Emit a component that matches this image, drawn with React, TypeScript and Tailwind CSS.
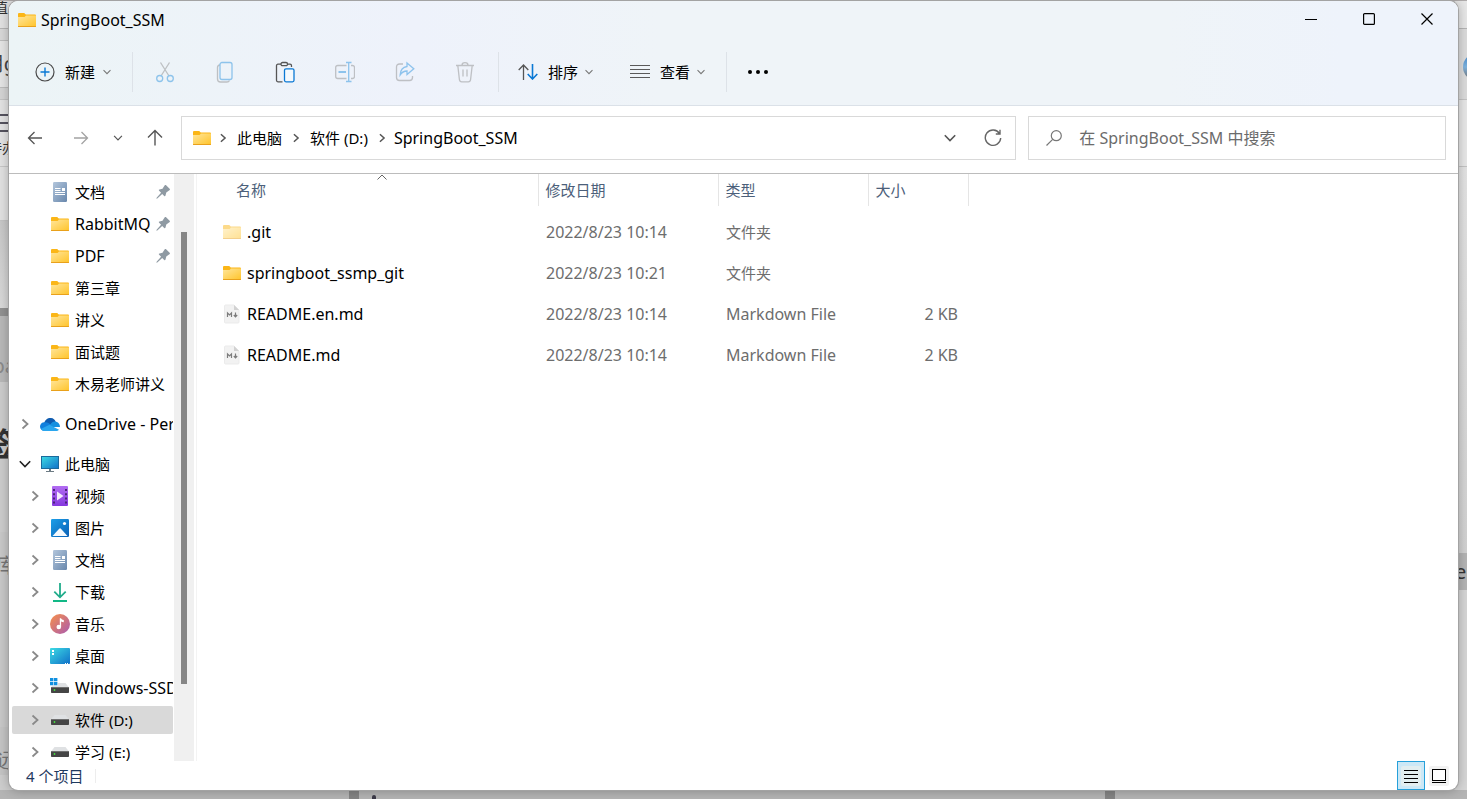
import { ReactNode, useState } from "react";
import { twMerge } from "tailwind-merge";

type IconProps = { className?: string };

const ChevronRight = ({ className }: IconProps) => (
  <svg viewBox="0 0 8 12" className={twMerge("w-2 h-3", className)} fill="none" stroke="currentColor" strokeWidth="1.8">
    <path d="M1.5 1.5 6.5 6l-5 4.5" />
  </svg>
);

const ChevronDown = ({ className }: IconProps) => (
  <svg viewBox="0 0 12 8" className={twMerge("w-2 h-1.5", className)} fill="none" stroke="currentColor" strokeWidth="1.6">
    <path d="M.8 1.2 6 6.6l5.2-5.4" />
  </svg>
);

const FolderIcon = ({ className }: IconProps) => (
  <svg viewBox="0 0 18 14" className={twMerge("w-[18px] h-3.5 shrink-0", className)}>
    <defs>
      <linearGradient id="folder" x1="0" y1="0" x2="1" y2="1">
        <stop offset="0" stopColor="#ffe69c" />
        <stop offset="1" stopColor="#ffc52e" />
      </linearGradient>
    </defs>
    <path d="M0 1a1 1 0 0 1 1-1h5.2l1.6 1.4H17a1 1 0 0 1 1 1V6H0z" fill="#fbb617" />
    <path d="M0 4h6.6l1.4-1.6h10V13H0z" fill="url(#folder)" />
    <path d="M0 13h18v.4a.6.6 0 0 1-.6.6H.6a.6.6 0 0 1-.6-.6z" fill="#e9a11b" />
  </svg>
);

const DocumentIcon = () => (
  <svg viewBox="0 0 14 20" className="w-3.5 h-5">
    <defs>
      <linearGradient id="doc" x1="0" y1="0" x2="1" y2="1">
        <stop offset="0" stopColor="#b3c6dc" />
        <stop offset="1" stopColor="#6887ac" />
      </linearGradient>
    </defs>
    <rect width="14" height="20" rx="1.2" fill="url(#doc)" />
    <path d="M2 6.500h5.500M2 8.500h5.500M2 10.500h10M2 12.500h10" stroke="#fff" />
    <rect x="9" y="6" width="3" height="3" fill="#fff" />
  </svg>
);

const CloudIcon = () => (
  <svg viewBox="0 0 20 13" className="w-5 h-[13px]">
    <path d="M4 6C4.800 1.500 8-.2 11 .1c2.300.2 4 1.600 4.700 3.600L9 8z" fill="#0f5cb0" />
    <path d="M4.500 4.300C1.800 4.300 0 6.300 0 8.600 0 11 1.800 13 4.400 13L12 7.500 8.500 5c-1-.6-2.500-.8-4-.7z" fill="#1180dd" />
    <path d="M10 7c1.500-2.800 4.200-3.900 6.300-3.200C18.800 4.500 20 6.500 20 9L9 9z" fill="#1590e0" />
    <path d="M9.500 6.800 19 11.800c-.7.800-1.700 1.200-3 1.200H4.400c-1.600 0-2.900-.7-3.600-1.900z" fill="#2aa6ee" />
  </svg>
);

const ComputerIcon = () => (
  <svg viewBox="0 0 18 16" className="w-[18px] h-4">
    <defs>
      <linearGradient id="screen" x1="0" y1="0" x2="1" y2="1">
        <stop offset="0" stopColor="#3ddbe4" />
        <stop offset="1" stopColor="#1070c8" />
      </linearGradient>
    </defs>
    <rect x=".5" y=".5" width="17" height="12" fill="url(#screen)" stroke="#1b6a9c" />
    <path d="M8 13h2v2h3v1H5v-1h3z" fill="#6d7b84" />
  </svg>
);

const VideoIcon = () => (
  <svg viewBox="0 0 16 20" className="w-4 h-5">
    <defs>
      <linearGradient id="video" x1="0" y1="0" x2="0" y2="1">
        <stop offset="0" stopColor="#b26cf2" />
        <stop offset="1" stopColor="#8538df" />
      </linearGradient>
    </defs>
    <rect width="16" height="20" rx="1" fill="url(#video)" />
    <path d="M2 3v15M14 3v15" stroke="#43206e" strokeWidth="1.800" strokeDasharray="2 2.200" />
    <path d="M5 5.500v9l6.500-4.500z" fill="#f3eafc" />
  </svg>
);

const PictureIcon = () => (
  <svg viewBox="0 0 18 18" className="w-[18px] h-[18px]">
    <defs>
      <linearGradient id="picture" x1="0" y1="0" x2="1" y2="1">
        <stop offset="0" stopColor="#1c9fe8" />
        <stop offset="1" stopColor="#0a5fb5" />
      </linearGradient>
    </defs>
    <rect width="18" height="18" rx="1.200" fill="url(#picture)" />
    <path d="m1.500 17 6.700-7.200a1.200 1.200 0 0 1 1.700 0L16.500 17z" fill="#f4f9fd" />
    <circle cx="13.500" cy="4.500" r="1.600" fill="#fff" />
  </svg>
);

const DownloadIcon = () => (
  <svg viewBox="0 0 14 19" className="w-3.5 h-[19px]" fill="none" strokeWidth="1.800">
    <path d="M7 0v14M1.300 8.700 7 14.300l5.700-5.600" stroke="#20ac8b" />
    <path d="M0 18h14" stroke="#12b886" />
  </svg>
);

const MusicIcon = () => (
  <svg viewBox="0 0 20 20" className="w-5 h-5">
    <defs>
      <linearGradient id="music" x1="0" y1="0" x2="1" y2="1">
        <stop offset="0.100" stopColor="#f08b54" />
        <stop offset="1" stopColor="#a95ab0" />
      </linearGradient>
    </defs>
    <circle cx="10" cy="10" r="10" fill="url(#music)" />
    <ellipse cx="8.800" cy="13" rx="2.300" ry="2.200" fill="#fff" />
    <path d="M9.800 4.200h1.300c.3 1.300 1.300 1.500 2.700 1.800v2.200c-1 0-2-.3-2.700-.8V13H9.800z" fill="#fff" />
  </svg>
);

const DesktopIcon = () => (
  <svg viewBox="0 0 20 16" className="w-5 h-4">
    <rect width="20" height="16" rx="1" fill="url(#screen)" />
    <path d="M2 2h2v2H2zM2 5h2v2H2z" fill="#fff" />
    <path d="M15 15.500h1M17 15.500h1" stroke="#fff" />
  </svg>
);

const DriveIcon = ({ windows }: { windows?: boolean }) => (
  <svg viewBox="0 0 20 20" className="w-5 h-5">
    <path d="M4.500 5h11L19 9.500H1z" fill="#dfe1e3" />
    <rect x="1" y="9" width="18" height="6" rx=".8" fill="#454545" />
    <path d="M1 9.500h18" stroke="#6f6f6f" />
    <circle cx="4.500" cy="12" r=".9" fill="#45e03d" />
    {windows && (
      <>
        <path d="M0 0h8v7.500H0z" fill="#fff" />
        <path d="M0 0h3.400v3.200H0zM4 0h3.400v3.200H4zM0 4h3.400v3.200H0zM4 4h3.400v3.200H4z" fill="#1190e0" />
      </>
    )}
  </svg>
);

const MarkdownIcon = () => (
  <svg viewBox="0 0 16 20" className="w-4 h-5">
    <path d="M1.500 1H10l5 5v12a1 1 0 0 1-1 1H1.500a1 1 0 0 1-1-1V2a1 1 0 0 1 1-1z" fill="#f2f2f2" stroke="#ebebeb" />
    <path d="m10 1 5 5h-5z" fill="#d2d2d2" />
    <path d="M3.500 13V9L5.500 11l2-2v4M11.500 8.500V12M9.800 11l1.700 1.800L13.200 11" fill="none" stroke="#7c7c7c" strokeWidth="1.200" />
  </svg>
);

const PinIcon = () => (
  <svg viewBox="0 0 14 14" className="w-3.5 h-3.5" fill="#8f9aa3">
    <path d="M8.600.4a1 1 0 0 1 1.500-.1l3.500 3.500a1 1 0 0 1-.2 1.500L10.300 7.500l-.8 3a.8.800 0 0 1-1.300.4L6.200 8.900 1.300 13.500l-.9.200.2-.9L5.100 7.800 3.100 5.800a.8.800 0 0 1 .4-1.300l3-.8z" />
  </svg>
);

const icons = {
  folder: <FolderIcon />,
  document: <DocumentIcon />,
  cloud: <CloudIcon />,
  computer: <ComputerIcon />,
  video: <VideoIcon />,
  picture: <PictureIcon />,
  download: <DownloadIcon />,
  music: <MusicIcon />,
  desktop: <DesktopIcon />,
  drive: <DriveIcon />,
  windowsDrive: <DriveIcon windows />,
};

type TreeItem = {
  id: string;
  label: string;
  icon: keyof typeof icons;
  pinned?: boolean;
  root?: boolean;
  arrow?: "right" | "down";
};

const quickAccess: TreeItem[] = [
  { id: "q-docs", label: "文档", icon: "document", pinned: true },
  { id: "q-mq", label: "RabbitMQ", icon: "folder", pinned: true },
  { id: "q-pdf", label: "PDF", icon: "folder", pinned: true },
  { id: "q-ch3", label: "第三章", icon: "folder" },
  { id: "q-notes", label: "讲义", icon: "folder" },
  { id: "q-exam", label: "面试题", icon: "folder" },
  { id: "q-muyi", label: "木易老师讲义", icon: "folder" },
];

const oneDrive: TreeItem[] = [
  { id: "onedrive", label: "OneDrive - Personal", icon: "cloud", root: true, arrow: "right" },
];

const thisPc: TreeItem[] = [
  { id: "pc", label: "此电脑", icon: "computer", root: true, arrow: "down" },
  { id: "video", label: "视频", icon: "video", arrow: "right" },
  { id: "pictures", label: "图片", icon: "picture", arrow: "right" },
  { id: "docs", label: "文档", icon: "document", arrow: "right" },
  { id: "downloads", label: "下载", icon: "download", arrow: "right" },
  { id: "music", label: "音乐", icon: "music", arrow: "right" },
  { id: "desktop", label: "桌面", icon: "desktop", arrow: "right" },
  { id: "c", label: "Windows-SSD (C:)", icon: "windowsDrive", arrow: "right" },
  { id: "d", label: "软件 (D:)", icon: "drive", arrow: "right" },
  { id: "e", label: "学习 (E:)", icon: "drive", arrow: "right" },
];

const files = [
  { name: ".git", date: "2022/8/23 10:14", type: "文件夹", size: "", icon: <FolderIcon className="opacity-50" /> },
  { name: "springboot_ssmp_git", date: "2022/8/23 10:21", type: "文件夹", size: "", icon: <FolderIcon /> },
  { name: "README.en.md", date: "2022/8/23 10:14", type: "Markdown File", size: "2 KB", icon: <MarkdownIcon /> },
  { name: "README.md", date: "2022/8/23 10:14", type: "Markdown File", size: "2 KB", icon: <MarkdownIcon /> },
];

// Latin text is set one pixel larger than Chinese text
const textSize = (text: string) => (/^[\x20-\x7e]*$/.test(text) ? "text-[16px]" : "text-[15px]");

export default function App() {
  return (
    <div className="relative h-screen overflow-hidden bg-[#cdcdcd] px-[9px] pt-px pb-[9px] font-['Noto_Sans','Noto_Sans_CJK_SC',sans-serif] text-[15px] leading-5 text-black">
      <Backdrop />
      <main className="relative h-full flex flex-col overflow-hidden rounded-[9px] bg-white shadow-[0_0_0_1px_#a3a3a3,0_0_12px_rgba(0,0,0,0.3)]">
        <header className="bg-[linear-gradient(90deg,#ecf4f6,#eef2fb_28%,#eff4f8_45%,#eff4f8_80%,#eef3fb_92%)] border-b border-[#dbe1e8]">
          <TitleBar />
          <Toolbar />
        </header>
        <AddressBar />
        <div className="flex flex-1 min-h-0">
          <Sidebar />
          <FileList />
        </div>
        <StatusBar />
      </main>
    </div>
  );
}

// The browser window that shows round the edges of the explorer
const Backdrop = () => (
  <div aria-hidden="true" className="absolute inset-0 flex flex-col overflow-hidden text-[#333]">
    <div className="flex h-px shrink-0 gap-8 bg-[#b0acac] pl-[35px]">
      <i className="w-5 bg-[#3a7fc0]" />
      <i className="w-[90px] bg-[#5c5658]" />
      <i className="w-4 bg-[#c98a52]" />
      <i className="w-[86px] bg-[#5c5658]" />
      <i className="w-4 bg-[#2e8b6a]" />
      <i className="w-[76px] bg-[#5c5658]" />
      <i className="w-5 bg-[#c9a338]" />
      <i className="w-[76px] bg-[#5c5658]" />
      <i className="w-5 bg-[#c9a338]" />
      <i className="w-20 bg-[#5c5658]" />
      <i className="w-4 bg-[#2785a8]" />
      <i className="w-[120px] bg-[#5c5658]" />
      <i className="w-4 bg-[#2785a8]" />
      <i className="w-[100px] bg-[#5c5658]" />
      <i className="w-4 bg-[#2e8b6a]" />
    </div>
    <div className="flex flex-1 min-h-0 justify-between">
      <div className="w-4 shrink-0 overflow-hidden whitespace-nowrap">
        <div className="h-7 bg-[#e3e3e3] border-b border-[#b5b5b5] flex justify-end pr-2 leading-3">值</div>
        <div className="h-3 bg-[#d9d9d9] border-b border-[#bdbdbd]" />
        <div className="h-[47px] bg-[#e6e6e6] border-b border-[#bdbdbd] flex items-center justify-end text-xl text-[#444]">
          用g
        </div>
        <div className="h-3 bg-[#d5d5d5] border-b border-[#c4c4c4]" />
        <div className="h-[67px] bg-[#e4e4e4] border-b border-[#c8c8c8] flex flex-col gap-1.5 pt-3.5">
          <i className="h-0.5 shrink-0 bg-[#55535f]" />
          <i className="h-0.5 shrink-0 bg-[#55535f]" />
          <i className="h-0.5 shrink-0 bg-[#55535f]" />
          <span className="flex justify-end text-sm leading-5">待办</span>
        </div>
        <div className="h-[54px] bg-[#e2e2e2] border-b border-[#c4c4c4]" />
        <div className="h-[87px] bg-linear-to-b from-[#c8c8c8] to-[#dadada]" />
        <div className="h-2 bg-[#929292]" />
        <div className="h-[66px] bg-[#b9b9b9] flex items-end justify-end text-xl leading-8 text-[#8b8b8b]">ba</div>
        <div className="h-[150px] bg-[#cdcdcd] flex justify-end pt-11 text-[32px] leading-9 font-bold">签</div>
        <div className="h-[195px] bg-[#c9c9c9] flex justify-end pt-5 text-xl text-[#777]">库</div>
        <div className="bg-[#c5c5c5] flex justify-end pt-5 text-xl text-[#777]">远</div>
      </div>
      <div className="w-3 shrink-0 bg-[#d6d6d6]">
        <div className="h-7 bg-[#e8e8e8] border-b border-[#b5b5b5]" />
        <div className="h-[71px] bg-[#dcdcdc] border-b border-[#c4c4c4] pt-6 pl-2">
          <div className="size-7 rounded-full bg-linear-to-b from-[#3b82c4] via-[#7fb4e0] to-[#6f6a66]" />
        </div>
        <div className="h-[67px] bg-[#e8e8e8] border-b border-[#c4c4c4]" />
        <div className="h-[386px] bg-linear-to-b from-[#e4e4e4] to-[#d2d2d2]" />
        <div className="h-[37px] bg-[#b5b5b5] flex items-center text-xl">e</div>
      </div>
    </div>
    <div className="flex h-[9px] shrink-0 items-stretch bg-[#b4b4b4] pl-[349px]">
      <i className="w-2.5 bg-[#848484]" />
      <i className="ml-[13px] w-1 self-end h-1 rounded-t-full bg-[#3c3a48]" />
      <i className="ml-[729px] w-2.5 bg-[#848484]" />
    </div>
  </div>
);

const TitleBar = () => (
  <div className="flex h-[37px] items-center justify-between">
    <div className="flex items-center gap-[5px] pl-[9px]">
      <FolderIcon />
      <h1 className="text-[16px]">SpringBoot_SSM</h1>
    </div>
    <div className="flex h-9 self-start pr-0.5">
      <WindowButton label="最小化">
        <path d="M0 6.500h12" />
      </WindowButton>
      <WindowButton label="最大化">
        <rect x=".6" y=".6" width="10.800" height="10.800" rx="1" />
      </WindowButton>
      <WindowButton label="关闭">
        <path d="m.5.5 11 11M11.500.5l-11 11" />
      </WindowButton>
    </div>
  </div>
);

const WindowButton = ({ label, children }: { label: string; children: ReactNode }) => (
  <button aria-label={label} className="flex w-[58px] items-center justify-center hover:bg-black/5">
    <svg viewBox="0 0 12 12" className="size-3" fill="none" stroke="#000" strokeWidth="1.200">
      {children}
    </svg>
  </button>
);

const Toolbar = () => (
  <div className="flex h-[67px] items-center pl-[26px]">
    <button className="flex items-center">
      <svg viewBox="0 0 20 20" className="size-5 mr-2.5" fill="none" strokeWidth="1.200">
        <circle cx="10" cy="10" r="9" stroke="#4a4a4a" />
        <path d="M10 5.500v9M5.500 10h9" stroke="#0a78d4" strokeWidth="1.400" />
      </svg>
      新建
      <ChevronDown className="ml-2 text-[#777]" />
    </button>
    <Separator className="ml-[21px]" />
    <div className="flex items-center gap-9 px-5">
      <ToolButton label="剪切" disabled>
        <path d="M5.500 1.500 14 15M14.500 1.500 6 15" stroke="#8f8f8f" />
        <circle cx="4.700" cy="17.500" r="3" stroke="#2f95e0" />
        <circle cx="15.300" cy="17.500" r="3" stroke="#2f95e0" />
      </ToolButton>
      <ToolButton label="复制" disabled>
        <path d="M5 4C3 4.200 2.500 5 2.500 6.500V18c0 2 1 3 3 3h6.500c1.200 0 2-.5 2.500-1.500" stroke="#8f8f8f" />
        <rect x="5" y="1.500" width="12" height="17" rx="2" stroke="#2f95e0" />
      </ToolButton>
      <ToolButton label="粘贴">
        <path d="M6 3.200H3c-1 0-1.500.6-1.500 1.500v14.600c0 1 .6 1.500 1.500 1.500h4.500M12.500 3.200H15c1 0 1.500.6 1.500 1.500V6" stroke="#555" />
        <rect x="6" y="1.500" width="6.500" height="3.200" rx="1.500" stroke="#555" />
        <rect x="9.500" y="7.800" width="9.500" height="13" rx="1.500" stroke="#0a78d4" fill="#f4f9fd" />
      </ToolButton>
      <ToolButton label="重命名" disabled>
        <path d="M11.500 4.500H2.800C1.500 4.500.7 5.300.7 6.500v9c0 1.200.8 2 2.100 2h8.700M16 4.500h1.500c1.200 0 2 .8 2 2v9c0 1.200-.8 2-2 2H16" stroke="#8f8f8f" />
        <path d="M3.500 11H11" stroke="#2f95e0" strokeWidth="2" />
        <path d="M13.700 1.500v19M11 1.500h5.500M11 20.500h5.500" stroke="#2f95e0" />
      </ToolButton>
      <ToolButton label="共享" disabled>
        <path d="M8 3H4.500C2.700 3 1.500 4 1.500 6v10.500c0 2 1.200 3 3 3h10c2 0 3-1.200 3-3V15" stroke="#8f8f8f" />
        <path d="m12 2 6.800 5.700L12 13.500V10c-3 0-5 1-6.800 3.800C5.500 9 8 6 12 5.500z" stroke="#2f95e0" />
      </ToolButton>
      <ToolButton label="删除" disabled>
        <path d="M1 4.500h18M7 4.200C7 .8 13 .8 13 4.200M2.800 4.500l1.600 14c.2 1.500 1 2.300 2.300 2.300h6.600c1.300 0 2.100-.8 2.300-2.300l1.600-14M8 8.500v7M12 8.500v7" stroke="#8f8f8f" />
      </ToolButton>
    </div>
    <Separator className="ml-px" />
    <button className="flex items-center ml-[19px]">
      <svg viewBox="0 0 20 16" className="w-5 h-4 mr-2.5" fill="none" strokeWidth="1.300">
        <path d="M5.500 16V1M.7 6l4.800-5 4.800 5" stroke="#555" />
        <path d="M14.500 0v15M9.700 10l4.800 5 4.800-5" stroke="#0a78d4" strokeWidth="1.600" />
      </svg>
      排序
      <ChevronDown className="ml-[7px] text-[#777]" />
    </button>
    <button className="flex items-center ml-[37px]">
      <svg viewBox="0 0 20 14" className="w-5 h-3.5 mr-2.5" stroke="#5a5a5a" strokeWidth="1.100">
        <path d="M0 .5h20M0 4.500h20M0 8.500h20M0 12.500h20" />
      </svg>
      查看
      <ChevronDown className="ml-[7px] text-[#777]" />
    </button>
    <Separator className="ml-[21px]" />
    <button aria-label="查看更多" className="ml-5">
      <svg viewBox="0 0 22 6" className="w-[22px] h-1.5">
        <circle cx="3" cy="3" r="2" />
        <circle cx="11" cy="3" r="2" />
        <circle cx="19" cy="3" r="2" />
      </svg>
    </button>
  </div>
);

const Separator = ({ className }: IconProps) => (
  <div className={twMerge("w-px h-10 bg-[#dde2e8]", className)} />
);

type ToolButtonProps = { label: string; disabled?: boolean; children: ReactNode };

const ToolButton = ({ label, disabled, children }: ToolButtonProps) => (
  <button aria-label={label} disabled={disabled} className="w-6 flex justify-center disabled:opacity-50">
    <svg viewBox="0 0 20 22" className="w-5 h-[22px]" fill="none" strokeWidth="1.300">
      {children}
    </svg>
  </button>
);

const AddressBar = () => (
  <nav className="flex h-[68px] items-center border-b border-[#bcbcbc] pr-3 pb-1 pl-[18px]">
    <div className="flex w-[154px] shrink-0 items-center gap-6">
      <button aria-label="后退" className="mr-1.5 text-[#555]">
        <svg viewBox="0 0 16 14" className="w-4 h-3.5" fill="none" stroke="currentColor" strokeWidth="1.300">
          <path d="M15 7H1.500M7.500 1l-6 6 6 6" />
        </svg>
      </button>
      <button aria-label="前进" className="text-[#a3a3a3]">
        <svg viewBox="0 0 16 14" className="w-4 h-3.5" fill="none" stroke="currentColor" strokeWidth="1.300">
          <path d="M1 7h13.500M8.500 1l6 6-6 6" />
        </svg>
      </button>
      <button aria-label="最近位置" className="text-[#555]">
        <ChevronDown className="w-2.5" />
      </button>
      <button aria-label="向上" className="text-[#555]">
        <svg viewBox="0 0 16 17" className="w-4 h-[17px]" fill="none" stroke="currentColor" strokeWidth="1.400">
          <path d="M8 16.500V1.500M1 8.500l7-7 7 7" />
        </svg>
      </button>
    </div>
    <div className="grid flex-1 grid-cols-[2fr_1fr] gap-3">
      <div className="flex h-11 items-center border border-[#d9d9d9] pl-[11px]">
        <FolderIcon className="mr-2" />
        <ChevronRight className="text-[#555] h-2.5" />
        <button className="mx-2.5">此电脑</button>
        <ChevronRight className="text-[#555] h-2.5" />
        <button className="mx-2.5">软件 (D:)</button>
        <ChevronRight className="text-[#555] h-2.5" />
        <button className="mx-2 text-[16px]">SpringBoot_SSM</button>
        <button aria-label="历史记录" className="ml-auto text-[#555]">
          <ChevronDown className="w-3.5 h-2" />
        </button>
        <button aria-label="刷新" className="mr-[13px] ml-[27px] text-[#666]">
          <svg viewBox="0 0 18 18" className="size-[18px]" fill="none" stroke="currentColor" strokeWidth="1.400">
            <path d="M15.500 4.500A7.700 7.700 0 1 0 16.700 9M16 .8v4.200h-4.200" />
          </svg>
        </button>
      </div>
      <label className="flex h-11 items-center gap-[17px] border border-[#d9d9d9] pl-[17px]">
        <svg viewBox="0 0 16 16" className="size-4 shrink-0" fill="none" stroke="#777" strokeWidth="1.200">
          <circle cx="10.300" cy="5.700" r="5" />
          <path d="M6.700 9.300.5 15.500" />
        </svg>
        <input
          type="search"
          aria-label="搜索"
          placeholder="在 SpringBoot_SSM 中搜索"
          className="w-full text-[16px] outline-none placeholder:text-[#6b6b6b]"
        />
      </label>
    </div>
  </nav>
);

const Sidebar = () => {
  const [selected, setSelected] = useState("d");

  return (
    <aside className="flex w-[188px] shrink-0 border-r border-[#f3f3f3]">
      <div className="flex w-[165px] shrink-0 flex-col gap-2 overflow-hidden pt-0.5 pr-px pl-[3px]">
        {[quickAccess, oneDrive, thisPc].map((group, index) => (
          <ul key={index} className="shrink-0">
            {group.map((item) => (
              <li key={item.id} className="py-0.5">
                <TreeRow item={item} selected={item.id === selected} onSelect={() => setSelected(item.id)} />
              </li>
            ))}
          </ul>
        ))}
      </div>
      <div className="flex w-5 justify-center bg-[#f0f0f0] pt-[58px]">
        <div className="w-1.5 h-[452px] bg-[#868686]" />
      </div>
    </aside>
  );
};

type TreeRowProps = { item: TreeItem; selected: boolean; onSelect: () => void };

const TreeRow = ({ item, selected, onSelect }: TreeRowProps) => (
  <button
    onClick={onSelect}
    className={twMerge(
      "flex h-7 w-full items-center overflow-hidden rounded-xs text-left whitespace-nowrap",
      item.root ? "pl-[7px]" : "pl-[17px]",
      selected && "bg-[#d9d9d9]"
    )}
  >
    <span className="flex w-3 shrink-0 justify-center">
      {item.arrow === "right" && <ChevronRight className="text-[#8a8a8a]" />}
      {item.arrow === "down" && <ChevronDown className="w-3 h-2 text-[#222]" />}
    </span>
    <span className="flex w-5 ml-[9px] mr-[5px] shrink-0 justify-center">{icons[item.icon]}</span>
    <span className={textSize(item.label)}>{item.label}</span>
    {item.pinned && (
      <span className="ml-auto pr-[3px]">
        <PinIcon />
      </span>
    )}
  </button>
);

const FileList = () => (
  <section className="flex-1 overflow-hidden">
    <table className="w-[771px] table-fixed text-left text-[#6d6d6d]">
      <colgroup>
        <col className="w-[341px]" />
        <col className="w-[180px]" />
        <col className="w-[150px]" />
        <col className="w-[100px]" />
      </colgroup>
      <thead className="text-[#4c607a]">
        <tr className="h-8 [&>th]:border-r [&>th]:border-[#e5e5e5] [&>th]:font-normal [&>th]:pl-[7px]">
          <th className="relative">
            <span className="pl-8">名称</span>
            <svg viewBox="0 0 10 6" className="absolute top-0 left-1/2 ml-2.5 w-2.5 h-1.5" fill="none" stroke="#666">
              <path d="M.5 5.500 5 1l4.500 4.500" />
            </svg>
          </th>
          <th>修改日期</th>
          <th>类型</th>
          <th>大小</th>
        </tr>
        <tr className="h-[5px]" />
      </thead>
      <tbody>
        {files.map((file) => (
          <tr key={file.name} className="h-[41px] hover:bg-[#e5f3ff]">
            <td className="pl-[26px]">
              <div className="flex items-center gap-1.5 text-[16px] text-black">
                <span className="flex w-[18px] justify-center">{file.icon}</span>
                {file.name}
              </div>
            </td>
            <td className="pl-2 text-[16px]">{file.date}</td>
            <td className={twMerge("pl-2", textSize(file.type))}>{file.type}</td>
            <td className="pr-2.5 text-right text-[16px]">{file.size}</td>
          </tr>
        ))}
      </tbody>
    </table>
  </section>
);

const StatusBar = () => (
  <footer className="flex h-[29px] shrink-0 items-center pl-[17px] text-[#1f3a5f]">
    <span>4 个项目</span>
    <div className="ml-3 w-px h-3.5 bg-[#ededed]" />
    <div className="ml-auto flex h-full items-center gap-1 pr-[9px]">
      <button aria-label="详细信息" className="flex h-full w-7 items-center justify-center border border-[#26a0da] bg-[#cce8f6]">
        <svg viewBox="0 0 20 20" className="size-5 rounded-xs bg-[#e2eef0]" stroke="#000">
          <path d="M3 4.500h14M3 8.500h14M3 12.500h14M3 16.500h14" />
        </svg>
      </button>
      <button aria-label="大图标" className="rounded-xs bg-[#f2f2f2]">
        <svg viewBox="0 0 20 20" className="size-5" fill="#fff" stroke="#000">
          <rect x="3.500" y="3.500" width="13" height="11" />
          <path d="M3 16.500h14" />
        </svg>
      </button>
    </div>
  </footer>
);
